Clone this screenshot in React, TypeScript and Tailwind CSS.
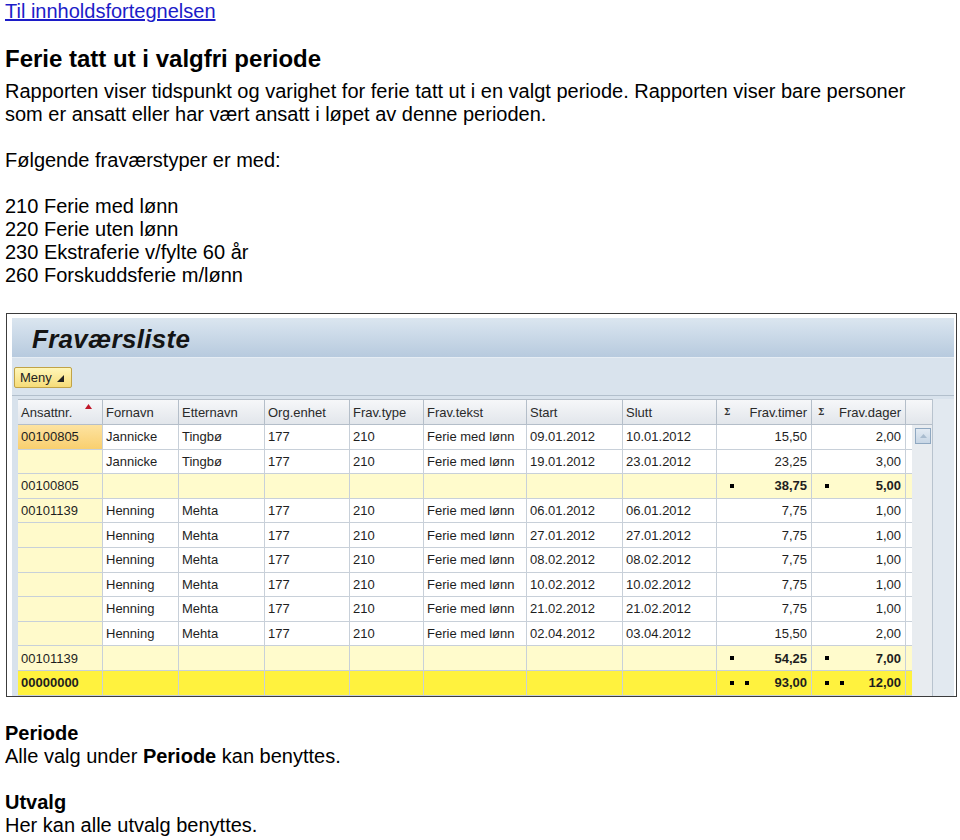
type Row = {
  kind: 'data' | 'sub' | 'total';
  ans: string;
  sel?: boolean;
  fornavn?: string;
  etternavn?: string;
  org?: string;
  type?: string;
  tekst?: string;
  start?: string;
  slutt?: string;
  timer: string;
  dager: string;
};

const rows: Row[] = [
  { kind: 'data', ans: '00100805', sel: true, fornavn: 'Jannicke', etternavn: 'Tingbø', org: '177', type: '210', tekst: 'Ferie med lønn', start: '09.01.2012', slutt: '10.01.2012', timer: '15,50', dager: '2,00' },
  { kind: 'data', ans: '', fornavn: 'Jannicke', etternavn: 'Tingbø', org: '177', type: '210', tekst: 'Ferie med lønn', start: '19.01.2012', slutt: '23.01.2012', timer: '23,25', dager: '3,00' },
  { kind: 'sub', ans: '00100805', timer: '38,75', dager: '5,00' },
  { kind: 'data', ans: '00101139', fornavn: 'Henning', etternavn: 'Mehta', org: '177', type: '210', tekst: 'Ferie med lønn', start: '06.01.2012', slutt: '06.01.2012', timer: '7,75', dager: '1,00' },
  { kind: 'data', ans: '', fornavn: 'Henning', etternavn: 'Mehta', org: '177', type: '210', tekst: 'Ferie med lønn', start: '27.01.2012', slutt: '27.01.2012', timer: '7,75', dager: '1,00' },
  { kind: 'data', ans: '', fornavn: 'Henning', etternavn: 'Mehta', org: '177', type: '210', tekst: 'Ferie med lønn', start: '08.02.2012', slutt: '08.02.2012', timer: '7,75', dager: '1,00' },
  { kind: 'data', ans: '', fornavn: 'Henning', etternavn: 'Mehta', org: '177', type: '210', tekst: 'Ferie med lønn', start: '10.02.2012', slutt: '10.02.2012', timer: '7,75', dager: '1,00' },
  { kind: 'data', ans: '', fornavn: 'Henning', etternavn: 'Mehta', org: '177', type: '210', tekst: 'Ferie med lønn', start: '21.02.2012', slutt: '21.02.2012', timer: '7,75', dager: '1,00' },
  { kind: 'data', ans: '', fornavn: 'Henning', etternavn: 'Mehta', org: '177', type: '210', tekst: 'Ferie med lønn', start: '02.04.2012', slutt: '03.04.2012', timer: '15,50', dager: '2,00' },
  { kind: 'sub', ans: '00101139', timer: '54,25', dager: '7,00' },
  { kind: 'total', ans: '00000000', timer: '93,00', dager: '12,00' },
];

const headers = ['Ansattnr.', 'Fornavn', 'Etternavn', 'Org.enhet', 'Frav.type', 'Frav.tekst', 'Start', 'Slutt'];

const gridCols =
  'grid grid-cols-[85px_76px_86px_85px_74px_103px_96px_94px_95px_94px_6px]';

function Dots({ n }: { n: number }) {
  return (
    <span className="flex gap-[11px]">
      {Array.from({ length: n }).map((_, i) => (
        <span key={i} className="inline-block h-[4px] w-[4px] bg-black" />
      ))}
    </span>
  );
}

function Sigma() {
  return <span className="font-['DejaVu_Serif',serif] text-[9px] font-bold leading-none text-[#333]">Σ</span>;
}

function TableRow({ row }: { row: Row }) {
  const rowBg =
    row.kind === 'total' ? 'bg-[#fff23e]' : row.kind === 'sub' ? 'bg-[#fffbcc]' : 'bg-white';
  const ansBg = row.sel
    ? 'bg-gradient-to-b from-[#fde3a0] to-[#f9cf6e]'
    : row.kind === 'total'
      ? 'bg-[#fff23e]'
      : 'bg-[#fffacb]';
  const bold = row.kind === 'data' ? '' : 'font-bold';
  const cell = 'flex h-[24.6px] items-center border-b border-r border-[#c8d0d9] px-[3px] whitespace-nowrap';
  const level = row.kind === 'total' ? 2 : 1;
  return (
    <div className={`${gridCols} ${rowBg} text-[13px] text-[#1e1e1e]`}>
      <div className={`${cell} ${ansBg} ${row.kind === 'total' ? 'font-bold' : ''}`}>{row.ans}</div>
      <div className={cell}>{row.fornavn}</div>
      <div className={cell}>{row.etternavn}</div>
      <div className={cell}>{row.org}</div>
      <div className={cell}>{row.type}</div>
      <div className={cell}>{row.tekst}</div>
      <div className={cell}>{row.start}</div>
      <div className={cell}>{row.slutt}</div>
      <div className={`${cell} justify-between pl-[13px] pr-[4px] ${bold}`}>
        {row.kind === 'data' ? <span /> : <Dots n={level} />}
        <span>{row.timer}</span>
      </div>
      <div className={`${cell} justify-between pl-[13px] pr-[4px] ${bold}`}>
        {row.kind === 'data' ? <span /> : <Dots n={level} />}
        <span>{row.dager}</span>
      </div>
      <div className="h-[24.6px] border-b border-[#c8d0d9]" />
    </div>
  );
}

function Fravaersliste() {
  const hcell =
    'flex h-[26px] items-center border-r border-t border-b border-[#b4bec9] bg-gradient-to-b from-[#f6f7f9] to-[#e2e6eb] px-[3px] text-[13px] text-[#2a2a2a] whitespace-nowrap';
  return (
    <div className="ml-[1px] w-[951px] border border-[#3c3c3c] bg-white pl-[5px] pr-[2px] pt-[4px]">
      <div className="bg-[#d8e2ec]">
        {/* title bar */}
        <div className="flex h-[40px] items-center border-b border-[#e6edf4] bg-gradient-to-b from-[#dbe6f0] to-[#b7cade] pl-[20px] pt-[3px]">
          <span className="text-[26px] font-bold italic tracking-[0.3px] text-[#141414]">Fraværsliste</span>
        </div>
        {/* toolbar */}
        <div className="flex h-[38px] items-center border-b border-[#b2bfcc] bg-[#d9e3ed] pl-[2px] pt-[1px]">
          <div className="flex h-[21px] w-[58px] items-center gap-[5px] rounded-[2px] border border-[#c1a347] bg-gradient-to-b from-[#fff6b8] to-[#f6dc78] pl-[5px] text-[13px] text-[#222]">
            Meny
            <svg width="7" height="7" viewBox="0 0 7 7" className="mt-[3px]">
              <path d="M7 0 L7 7 L0 7 Z" fill="#222" />
            </svg>
          </div>
        </div>
        {/* table */}
        <div className="flex pl-[6px] pt-[3px]">
          <div className="w-[894px]">
            <div className={gridCols}>
              {headers.map((h, i) => (
                <div key={h} className={`${hcell} ${i === 0 ? 'relative' : ''}`}>
                  {h}
                  {i === 0 && (
                    <svg width="7" height="5" viewBox="0 0 7 5" className="absolute right-[10px] top-[4px]">
                      <path d="M3.5 0 L7 5 L0 5 Z" fill="#c0182a" />
                    </svg>
                  )}
                </div>
              ))}
              <div className={`${hcell} justify-between pr-[4px] pl-[7px]`}>
                <Sigma />
                <span>Frav.timer</span>
              </div>
              <div className={`${hcell} justify-between pr-[4px] pl-[6px]`}>
                <Sigma />
                <span>Frav.dager</span>
              </div>
              <div className={hcell} />
            </div>
            {rows.map((r, i) => (
              <TableRow key={i} row={r} />
            ))}
          </div>
          <div className="flex w-[21px] flex-col border-r border-[#b8c3ce]">
            <div className="h-[26px] border-b border-t border-[#b4bec9] bg-gradient-to-b from-[#f6f7f9] to-[#e2e6eb]" />
            <div className="flex-1 bg-[#e8ecf0] pl-[3px] pt-[3px]">
              <div className="flex h-[16px] w-[16px] items-center justify-center border border-[#8fa8c1] bg-gradient-to-b from-[#e3ebf3] to-[#c7d6e5]">
                <svg width="7" height="4" viewBox="0 0 7 4">
                  <path d="M3.5 0 L7 4 L0 4 Z" fill="#a9bccf" />
                </svg>
              </div>
            </div>
          </div>
          <div className="flex-1 bg-[#e2e9f0]" />
        </div>
      </div>
    </div>
  );
}

export default function App() {
  return (
    <div className="min-h-[840px] bg-white pl-[5px] font-['Liberation_Sans',Arial,sans-serif] text-[20px] leading-[23px] text-black">
      <a href="#" className="text-[#1c1cc8] underline">
        Til innholdsfortegnelsen
      </a>
      <h1 className="mt-[22px] text-[24px] font-bold leading-[28px]">Ferie tatt ut i valgfri periode</h1>
      <p className="mt-[7px]">
        Rapporten viser tidspunkt og varighet for ferie tatt ut i en valgt periode. Rapporten viser bare personer
        <br />
        som er ansatt eller har vært ansatt i løpet av denne perioden.
      </p>
      <p className="mt-[23px]">Følgende fraværstyper er med:</p>
      <div className="mt-[23px]">
        <div>210 Ferie med lønn</div>
        <div>220 Ferie uten lønn</div>
        <div>230 Ekstraferie v/fylte 60 år</div>
        <div>260 Forskuddsferie m/lønn</div>
      </div>
      <div className="mt-[26px]">
        <Fravaersliste />
      </div>
      <div className="mt-[25px]">
        <div className="font-bold">Periode</div>
        <div>
          Alle valg under <span className="font-bold">Periode</span> kan benyttes.
        </div>
      </div>
      <div className="mt-[23px]">
        <div className="font-bold">Utvalg</div>
        <div>Her kan alle utvalg benyttes.</div>
      </div>
    </div>
  );
}
